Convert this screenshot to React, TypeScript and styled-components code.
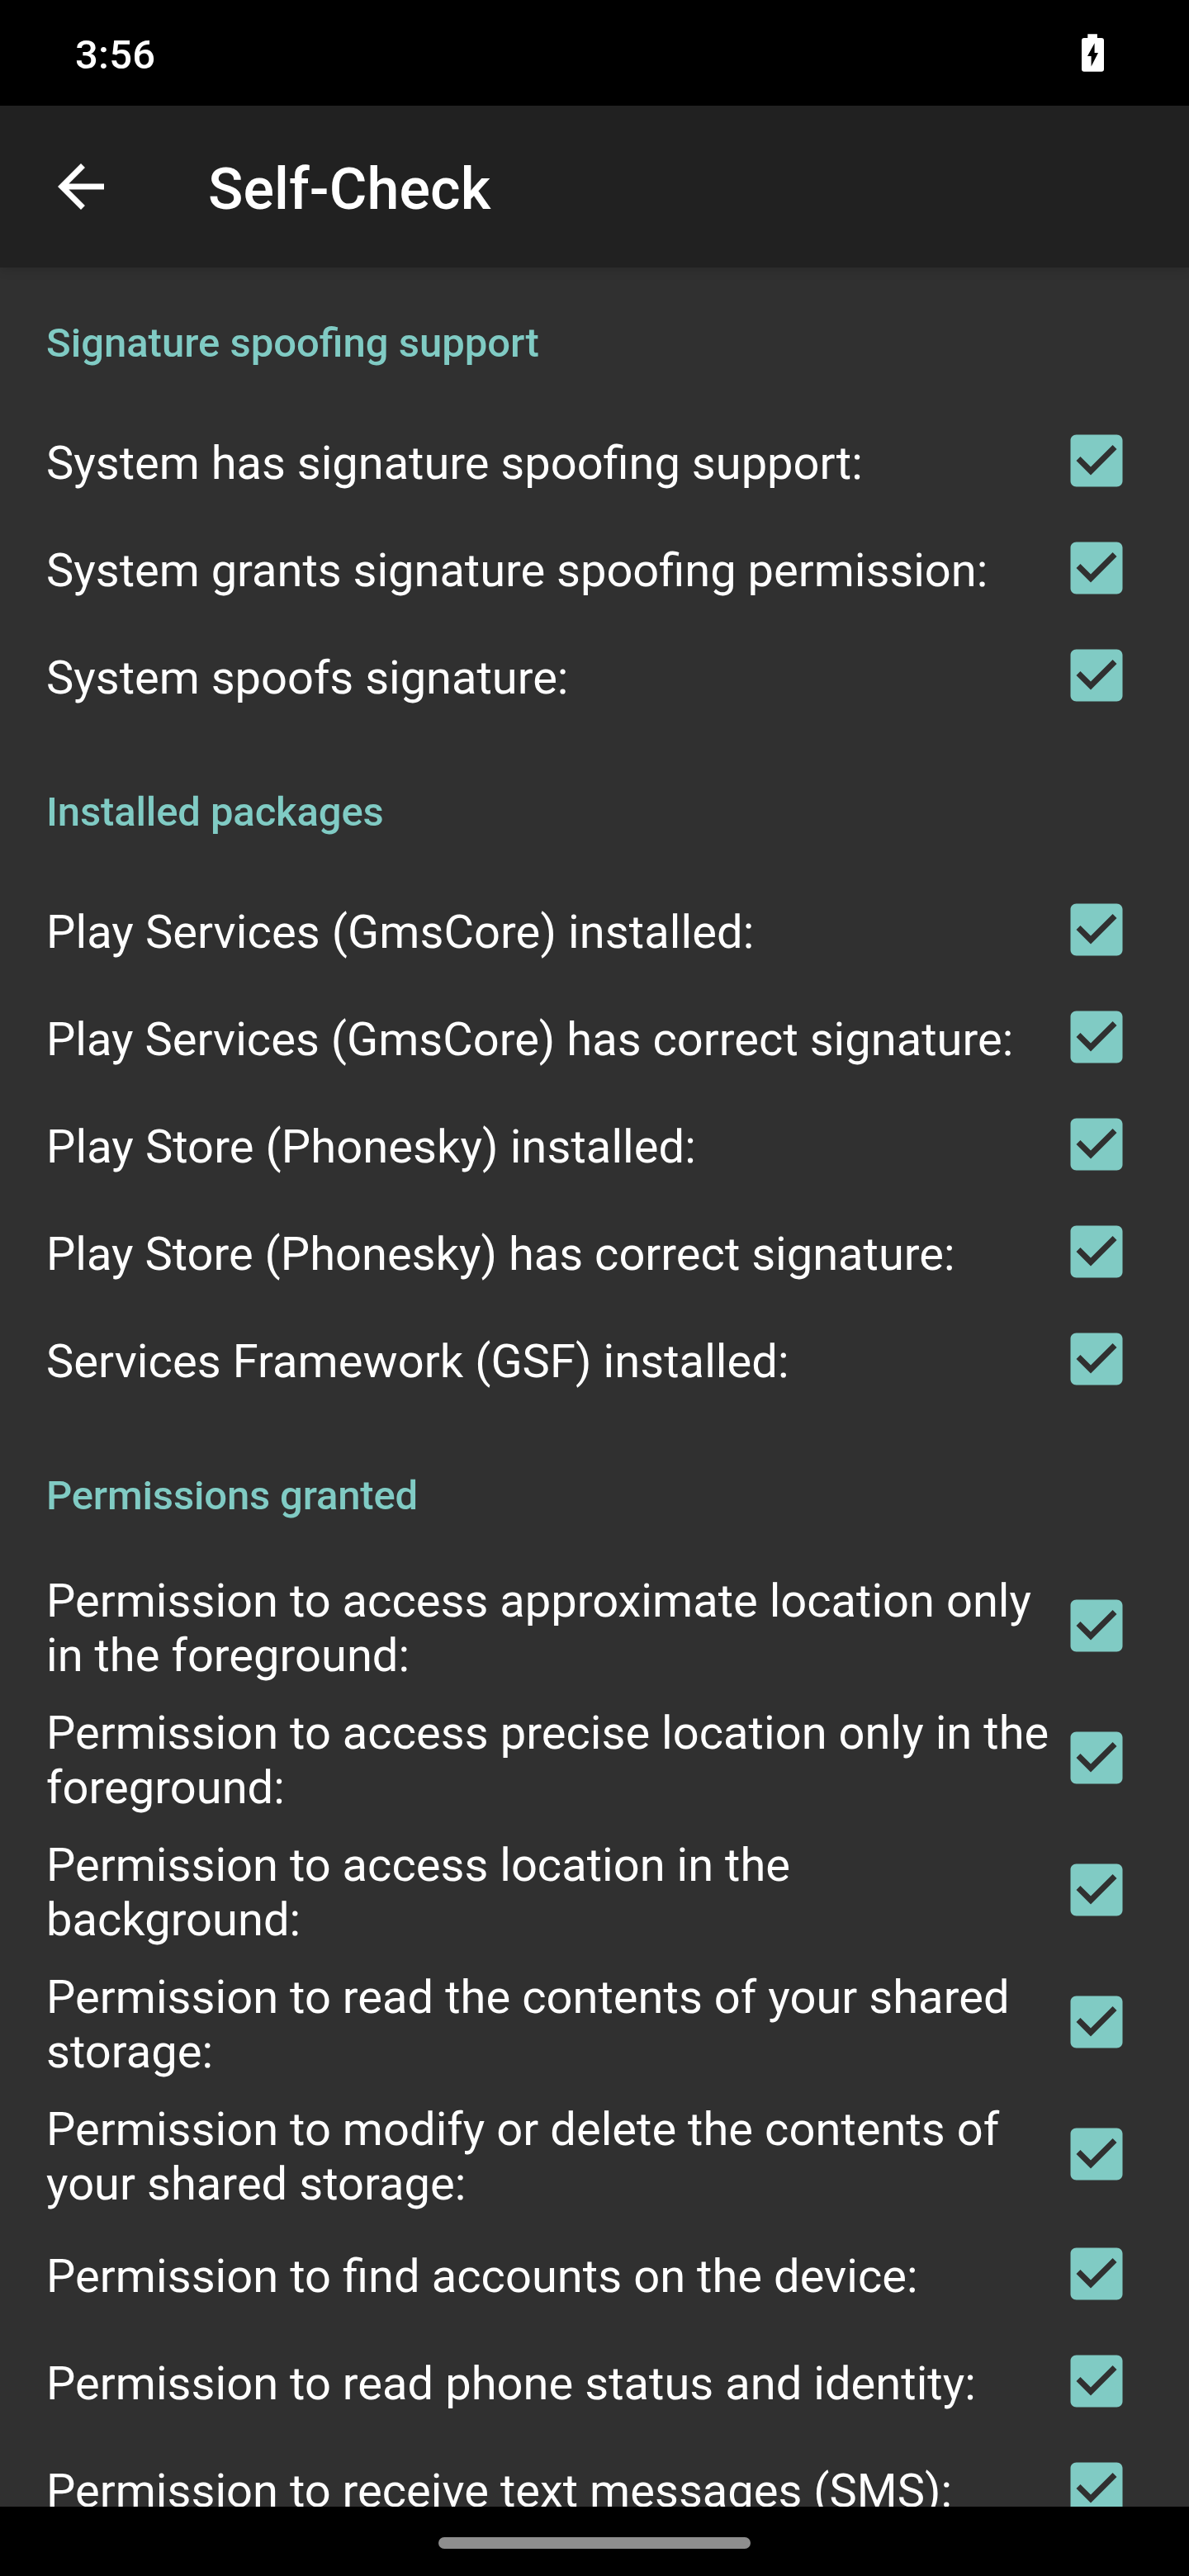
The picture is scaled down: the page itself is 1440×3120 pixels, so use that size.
import React from "react";
import styled, { createGlobalStyle } from "styled-components";

const GlobalStyle = createGlobalStyle`
  *, *::before, *::after { box-sizing: border-box; }
  body { margin: 0; background: #303030; }
`;

const Screen = styled.div`
  display: flex;
  flex-direction: column;
  width: 1440px;
  height: 3120px;
  overflow: hidden;
  background: #303030;
  color: #fff;
  font-family: Roboto, "Noto Sans", sans-serif;
  font-feature-settings: "liga" 1;
`;

const StatusBar = styled.header`
  flex: none;
  display: flex;
  align-items: center;
  justify-content: space-between;
  height: 128px;
  padding: 5px 103px 0 91px;
  background: #000;
`;

const Clock = styled.span`
  font-size: 49px;
  font-weight: 500;
  line-height: 58px;
  letter-spacing: 0.2px;
`;

const BatteryIcon = styled.svg`
  width: 27px;
  height: 46px;
  margin-bottom: 5px;
`;

const AppBar = styled.div`
  flex: none;
  z-index: 1;
  display: flex;
  align-items: center;
  gap: 112px;
  height: 196px;
  padding: 0 56px;
  background: #212121;
  box-shadow: 0 3px 12px rgba(0, 0, 0, 0.14);
`;

const BackIcon = styled.svg`
  width: 84px;
  height: 84px;
  fill: #fff;
`;

const Title = styled.h1`
  margin: 0;
  padding-top: 5px;
  font-size: 70px;
  font-weight: 500;
  line-height: 82px;
  letter-spacing: 0.1px;
`;

const Content = styled.main`
  flex: 1;
  min-height: 0;
  overflow: hidden;
`;

const Section = styled.section`
  padding-bottom: 9px;
`;

const SectionTitle = styled.h2<{ $tracking: number }>`
  display: flex;
  align-items: center;
  height: 169px;
  margin: 0;
  padding: 15px 56px 0;
  color: #80cbc4;
  font-size: 49px;
  font-weight: 500;
  line-height: 58px;
  letter-spacing: ${(p) => p.$tracking}px;
`;

const Row = styled.div<{ $tall?: boolean }>`
  display: flex;
  align-items: center;
  height: ${(p) => (p.$tall ? 160 : 130)}px;
  padding: 0 56px;
`;

const Label = styled.span<{ $tracking: number }>`
  flex: 1;
  padding-top: 6px;
  font-size: 56px;
  line-height: 66px;
  letter-spacing: ${(p) => p.$tracking}px;
  white-space: pre;
`;

const CheckBox = styled.span`
  flex: none;
  display: flex;
  justify-content: center;
  width: 112px;
`;

const CheckIcon = styled.svg`
  width: 84px;
  height: 84px;
  fill: #80cbc4;
`;

const NavBar = styled.footer`
  flex: none;
  display: flex;
  align-items: center;
  justify-content: center;
  height: 84px;
  padding-top: 4px;
  background: #000;
`;

const NavHandle = styled.span`
  width: 378px;
  height: 14px;
  border-radius: 7px;
  background: #8e8e8e;
`;

type Item = { text: string; tracking: number };
type Group = { title: string; tracking: number; items: Item[] };

const sections: Group[] = [
  {
    title: "Signature spoofing support",
    tracking: 0,
    items: [
      { text: "System has signature spoofing support:", tracking: 0 },
      { text: "System grants signature spoofing permission:", tracking: 0 },
      { text: "System spoofs signature:", tracking: 0 },
    ],
  },
  {
    title: "Installed packages",
    tracking: -0.12,
    items: [
      { text: "Play Services (GmsCore) installed:", tracking: 0.1 },
      { text: "Play Services (GmsCore) has correct signature:", tracking: 0.03 },
      { text: "Play Store (Phonesky) installed:", tracking: 0.1 },
      { text: "Play Store (Phonesky) has correct signature:", tracking: 0.02 },
      { text: "Services Framework (GSF) installed:", tracking: 0.08 },
    ],
  },
  {
    title: "Permissions granted",
    tracking: -0.17,
    items: [
      { text: "Permission to access approximate location only\nin the foreground:", tracking: 0.03 },
      { text: "Permission to access precise location only in the\nforeground:", tracking: 0.05 },
      { text: "Permission to access location in the\nbackground:", tracking: 0.03 },
      { text: "Permission to read the contents of your shared\nstorage:", tracking: 0.05 },
      { text: "Permission to modify or delete the contents of\nyour shared storage:", tracking: 0.05 },
      { text: "Permission to find accounts on the device:", tracking: 0.06 },
      { text: "Permission to read phone status and identity:", tracking: 0.05 },
      { text: "Permission to receive text messages (SMS):", tracking: 0.03 },
    ],
  },
];

function CheckRow({ text, tracking }: Item) {
  return (
    <Row $tall={text.includes("\n")}>
      <Label $tracking={tracking}>{text}</Label>
      <CheckBox role="checkbox" aria-checked="true">
        <CheckIcon viewBox="0 0 24 24">
          <path d="M19 3H5c-1.11 0-2 .9-2 2v14c0 1.1.89 2 2 2h14c1.11 0 2-.9 2-2V5c0-1.1-.89-2-2-2zm-9 14l-5-5 1.41-1.41L10 14.17l7.59-7.59L19 8l-9 9z" />
        </CheckIcon>
      </CheckBox>
    </Row>
  );
}

export default function App() {
  return (
    <Screen>
      <GlobalStyle />
      <StatusBar>
        <Clock>3:56</Clock>
        <BatteryIcon viewBox="0 0 27 46">
          <path
            fill="#fff"
            fillRule="evenodd"
            d="M7.3 0.3h11.6v4.7h5.1a3 3 0 0 1 3 3v34.7a3 3 0 0 1-3 3H3a3 3 0 0 1-3-3V8a3 3 0 0 1 3-3h4.3zM15.6 11.3L7 27h4.6v12.4L20 23h-4.4z"
          />
        </BatteryIcon>
      </StatusBar>
      <AppBar>
        <BackIcon viewBox="0 0 24 24">
          <path d="M20 11H7.83l5.59-5.59L12 4l-8 8 8 8 1.41-1.41L7.83 13H20v-2z" />
        </BackIcon>
        <Title>Self-Check</Title>
      </AppBar>
      <Content>
        {sections.map((section) => (
          <Section key={section.title}>
            <SectionTitle $tracking={section.tracking}>{section.title}</SectionTitle>
            {section.items.map((item) => (
              <CheckRow key={item.text} {...item} />
            ))}
          </Section>
        ))}
      </Content>
      <NavBar>
        <NavHandle />
      </NavBar>
    </Screen>
  );
}
